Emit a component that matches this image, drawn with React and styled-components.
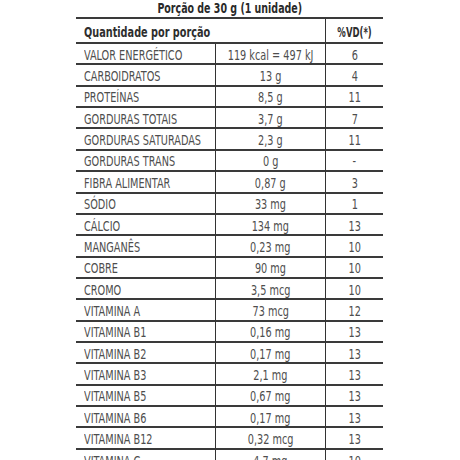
import React from "react";
import styled, { createGlobalStyle } from "styled-components";

const Global = createGlobalStyle`
  html, body { margin: 0; padding: 0; background: #fff; }
  body { font-family: "DejaVu Sans Condensed", "DejaVu Sans", "Liberation Sans", sans-serif; font-stretch: condensed; }
`;

const Page = styled.div`
  width: 460px;
  height: 460px;
  overflow: hidden;
  padding-left: 76px;
  box-sizing: border-box;
`;

const Panel = styled.div`
  width: 307px;
`;

const Title = styled.div`
  height: 17px;
  line-height: 16px;
  text-align: center;
  font-weight: bold;
  font-size: 13.5px;
  color: #2a2a2a;
  border-bottom: 2px solid #3a3a3a;
`;

const Grid = styled.div`
  display: grid;
  grid-template-columns: 140px 110px 57px;
`;

const Cell = styled.div`
  box-sizing: border-box;
  height: ${(p) => (p.$head ? "25px" : "21.37px")};
  border-bottom: 2px solid #3a3a3a;
  border-right: ${(p) => (p.$divider ? "1.5px solid #333" : "none")};
  display: flex;
  align-items: center;
  justify-content: ${(p) => (p.$left ? "flex-start" : "center")};
  padding-left: ${(p) => (p.$left ? "8px" : "0")};
  padding-top: 2px;
  grid-column: ${(p) => p.$span || "auto"};
  font-size: 13.5px;
  font-weight: ${(p) => (p.$head ? "bold" : "normal")};
  color: ${(p) => (p.$head ? "#2e2e2e" : "#4e4e4e")};
  white-space: nowrap;
`;

const Text = styled.span`
  display: inline-block;
  transform: scaleX(${(p) => p.$sx || 0.8});
  transform-origin: ${(p) => (p.$left ? "left center" : "center center")};
`;

const rows = [
  ["VALOR ENERGÉTICO", "119 kcal = 497 kJ", "6"],
  ["CARBOIDRATOS", "13 g", "4"],
  ["PROTEÍNAS", "8,5 g", "11"],
  ["GORDURAS TOTAIS", "3,7 g", "7"],
  ["GORDURAS SATURADAS", "2,3 g", "11"],
  ["GORDURAS TRANS", "0 g", "-"],
  ["FIBRA ALIMENTAR", "0,87 g", "3"],
  ["SÓDIO", "33 mg", "1"],
  ["CÁLCIO", "134 mg", "13"],
  ["MANGANÊS", "0,23 mg", "10"],
  ["COBRE", "90 mg", "10"],
  ["CROMO", "3,5 mcg", "10"],
  ["VITAMINA A", "73 mcg", "12"],
  ["VITAMINA B1", "0,16 mg", "13"],
  ["VITAMINA B2", "0,17 mg", "13"],
  ["VITAMINA B3", "2,1 mg", "13"],
  ["VITAMINA B5", "0,67 mg", "13"],
  ["VITAMINA B6", "0,17 mg", "13"],
  ["VITAMINA B12", "0,32 mcg", "13"],
  ["VITAMINA C", "4,7 mg", "10"],
];

export default function App() {
  return (
    <Page>
      <Global />
      <Panel>
        <Title><Text $sx={0.78}>Porção de 30 g (1 unidade)</Text></Title>
        <Grid>
          <Cell $head $left $span="1 / 3" $divider><Text $left>Quantidade por porção</Text></Cell>
          <Cell $head><Text $sx={0.7}>%VD(*)</Text></Cell>
          {rows.map(([a, b, c]) => (
            <React.Fragment key={a}>
              <Cell $left $divider><Text $left>{a}</Text></Cell>
              <Cell $divider><Text>{b}</Text></Cell>
              <Cell><Text>{c}</Text></Cell>
            </React.Fragment>
          ))}
        </Grid>
      </Panel>
    </Page>
  );
}
